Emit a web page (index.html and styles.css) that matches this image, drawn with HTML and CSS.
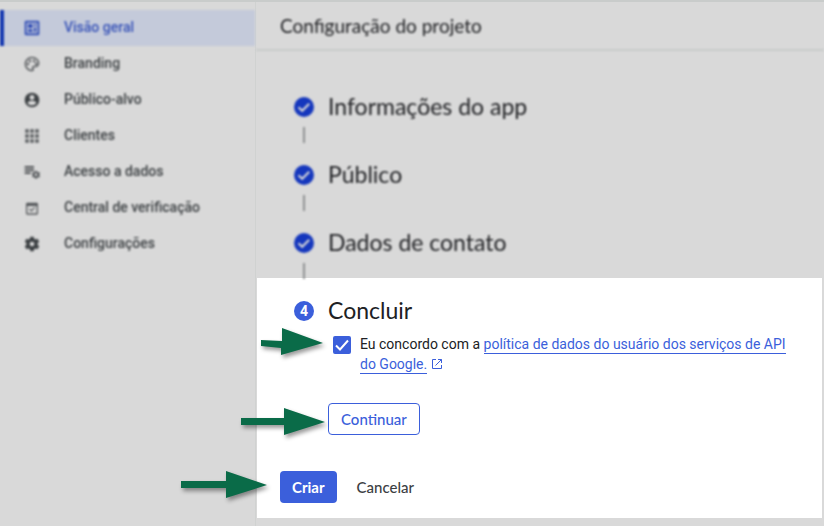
FILE: index.html
```html
<!DOCTYPE html>
<html lang="pt-BR">
<head>
<meta charset="utf-8">
<meta name="viewport" content="width=device-width, initial-scale=1">
<title>Configuração do projeto</title>
<link rel="stylesheet" href="styles.css">
</head>
<body>
<div class="app">
  <nav class="sidebar">
    <a class="nav-item active" href="#"><svg class="nav-icon" viewBox="0 0 24 24"><path fill-rule="evenodd" d="M3 1h18a2 2 0 0 1 2 2v18a2 2 0 0 1-2 2H3a2 2 0 0 1-2-2V3a2 2 0 0 1 2-2zm1 3v16h16V4zM6 6h7v6H6zm9 0h3v3h-3zm0 5h3v7h-3zM6 14h7v4H6z"/></svg><span>Visão geral</span></a>
    <a class="nav-item" href="#"><svg class="nav-icon soft" viewBox="0 0 24 24"><path d="M12 23C5.900 23 1 18 1 12S5.900 1 12 1s11 4.500 11 9.800c0 3.400-2.700 6.100-6.100 6.100h-2c-.9 0-1.200.9-.6 1.600 1.500 1.800.4 4.500-2.300 4.500zm0-19.700c-4.800 0-8.700 3.900-8.700 8.700s3.900 8.700 8.700 8.700c.5 0 .7-.4.4-.8-1.600-2.200-.2-5.300 2.500-5.300h2c2.100 0 3.800-1.700 3.800-3.800 0-4.100-3.900-7.500-8.700-7.500z"/><circle cx="6" cy="12" r="1.800"/><circle cx="9" cy="7.500" r="1.800"/><circle cx="15" cy="7.500" r="1.800"/><circle cx="18" cy="11.500" r="1.800"/></svg><span>Branding</span></a>
    <a class="nav-item" href="#"><svg class="nav-icon" viewBox="0 0 24 24"><path fill-rule="evenodd" d="M12 1a11 11 0 1 0 0 22 11 11 0 0 0 0-22zm0 3.500a3.700 3.700 0 1 1 0 7.400 3.700 3.700 0 0 1 0-7.400zM12 20c-2.800 0-5.200-1.400-6.600-3.500.1-2.200 4.400-3.400 6.600-3.400s6.500 1.200 6.600 3.400A7.900 7.900 0 0 1 12 20z"/></svg><span>Público-alvo</span></a>
    <a class="nav-item" href="#"><svg class="nav-icon soft" viewBox="0 0 24 24"><path d="M2 2h5v5H2zm7.500 0h5v5h-5zM17 2h5v5h-5zM2 9.500h5v5H2zm7.500 0h5v5h-5zm7.500 0h5v5h-5zM2 17h5v5H2zm7.500 0h5v5h-5zm7.500 0h5v5h-5z"/></svg><span>Clientes</span></a>
    <a class="nav-item" href="#"><svg class="nav-icon soft" viewBox="0 0 24 24"><path fill-rule="evenodd" d="M1 3h14v3H1zm0 4.500h14v3H1zM1 12h9v3H1zm16-2h2l.5 1.600 1.500.8 1.600-.4 1.400 2-1 1.400v1.500l1 1.300-1.300 2-1.700-.4-1.500.9L19 22h-2l-.6-1.500-1.500-.8-1.700.3-1.200-2 1-1.400v-1.400l-1-1.300 1.300-2 1.600.4 1.500-.8zm1 4a2 2 0 1 0 0 4 2 2 0 0 0 0-4z"/></svg><span>Acesso a dados</span></a>
    <a class="nav-item" href="#"><svg class="nav-icon soft" viewBox="0 0 24 24"><path fill-rule="evenodd" d="M5 4h14a2 2 0 0 1 2 2v14a2 2 0 0 1-2 2H5a2 2 0 0 1-2-2V6c0-1.100.9-2 2-2zm0 5v11h14V9zm2.500 5 1.300-1.300 2.200 2.200 4.500-4.400 1.300 1.300-5.800 5.700z"/></svg><span>Central de verificação</span></a>
    <a class="nav-item" href="#"><svg class="nav-icon" viewBox="0 0 24 24"><path fill-rule="evenodd" d="M9.500 1h5l.7 3.100 2 1.200 3.100-1 2.500 4.400-2.400 2.200v2.300l2.400 2.200-2.500 4.300-3.100-1-2 1.200-.7 3.100h-5l-.7-3.100-2-1.200-3.100 1-2.500-4.300 2.400-2.200v-2.300L1.200 8.700l2.500-4.400 3.100 1 2-1.200zM12 8.500a3.500 3.500 0 1 0 0 7 3.500 3.500 0 0 0 0-7z"/></svg><span>Configurações</span></a>
  </nav>
  <main class="main">
    <header class="header"><h1>Configuração do projeto</h1></header>
    <ol class="steps">
      <li class="step"><svg class="marker" viewBox="0 0 20 20"><circle cx="10" cy="10" r="10"/><path d="m4.500 10.300 3.700 3.500 7-7"/></svg><h2>Informações do app</h2></li>
      <li class="step"><svg class="marker" viewBox="0 0 20 20"><circle cx="10" cy="10" r="10"/><path d="m4.500 10.300 3.700 3.500 7-7"/></svg><h2>Público</h2></li>
      <li class="step"><svg class="marker" viewBox="0 0 20 20"><circle cx="10" cy="10" r="10"/><path d="m4.500 10.300 3.700 3.500 7-7"/></svg><h2>Dados de contato</h2></li>
    </ol>
    <form class="panel">
      <div class="panel-title"><span class="number">4</span><h2>Concluir</h2></div>
      <div class="consent">
        <svg class="arrow arrow-consent" viewBox="0 0 66 36"><path d="M2 14l21 1V2l41 15-42 12v-7L2 20z"/></svg>
        <span class="check"><input type="checkbox" id="agree" checked><svg viewBox="0 0 18 18"><path d="m3 9.500 4 4 8-9"/></svg></span>
        <div class="terms"><label for="agree">Eu concordo com a</label> <a href="#">política de dados do usuário dos serviços de API do Google.</a> <svg class="external" viewBox="0 0 12 12"><path d="M5 1.500H1.500v9h9V7M7 1.500h3.500V5M10.500 1.500 4.500 7.500"/></svg></div>
      </div>
      <div class="continue">
        <svg class="arrow" viewBox="0 0 88 36"><path d="M1 13h43V3l41 14-41 13V20H1z"/></svg>
        <button class="button outlined" type="button">Continuar</button>
      </div>
      <div class="actions">
        <div class="create">
          <svg class="arrow arrow-create" viewBox="0 0 88 36"><path d="M1 13h45V3l41 14-41 13V20H1z"/></svg>
          <button class="button filled" type="submit">Criar</button>
        </div>
        <button class="button plain" type="button">Cancelar</button>
      </div>
    </form>
  </main>
</div>
</body>
</html>
```
FILE: styles.css
```css
* { box-sizing: border-box; }

:root {
  --blue: #3b5fdb;
  --dim: #d9d9d9;
  --line: #c9cccb;
  --display: Lato, "Open Sans", sans-serif;
}

body {
  margin: 0;
  background: var(--dim);
  color: #202124;
  font: 14px/20px Roboto, sans-serif;
}

h1, h2 { margin: 0; font-family: var(--display); }

.app {
  display: grid;
  grid-template-columns: 256px 1fr;
  min-height: 100vh;
  border-top: 2px solid var(--line);
}

.sidebar {
  padding-top: 8px;
  border-right: 1px solid #d0d2d1;
}

.nav-item {
  display: flex;
  align-items: center;
  gap: 24px;
  height: 36px;
  padding-left: 20px;
  border-left: 4px solid transparent;
  color: #3c4043;
  font-weight: 500;
  text-decoration: none;
  filter: blur(1px);
}

.nav-item span { padding-bottom: 2px; }

.nav-item.active {
  border-color: #1236b0;
  background: #c4cada;
  color: #3551b7;
}

.nav-icon { width: 16px; height: 16px; fill: currentColor; }
.nav-icon.soft { fill: #55585b; }

.header {
  height: 49px;
  padding: 14px 24px;
  border-bottom: 2px solid var(--line);
  filter: blur(1px);
}

.header h1 { font-size: 19px; line-height: 20px; font-weight: 400; }

.steps {
  margin: 0;
  padding: 40px 38px 0;
  list-style: none;
  filter: blur(1px);
}

.step {
  display: grid;
  grid-template-columns: 20px 1fr;
  column-gap: 14px;
  align-items: center;
}

.step::after {
  content: "";
  width: 2px;
  height: 16px;
  margin: 4px 9px 16px;
  background: #909293;
}

.step:last-child::after { margin-bottom: 0; }

h2 { padding-bottom: 2px; font-size: 23px; line-height: 30px; font-weight: 400; }

.marker { width: 20px; height: 20px; fill: #1537bd; }
.marker path { fill: none; stroke: var(--dim); stroke-width: 2; }

.panel {
  margin: -1px 2px 8px 1px;
  padding: 17px 36px 15px 37px;
  background: #fff;
}

.panel-title { display: flex; align-items: center; gap: 14px; }

.number {
  width: 20px;
  border-radius: 50%;
  background: var(--blue);
  color: #fff;
  font-weight: 700;
  text-align: center;
}

.consent {
  position: relative;
  display: flex;
  gap: 9px;
  margin: 7px 0 0 39px;
}

.check {
  position: relative;
  flex: none;
  width: 18px;
  height: 18px;
  margin-top: 2px;
}

.check input {
  appearance: none;
  display: block;
  width: 18px;
  height: 18px;
  margin: 0;
  border: 2px solid var(--blue);
  border-radius: 2px;
}

.check input:checked { background: var(--blue); }

.check svg {
  position: absolute;
  inset: 0;
  fill: none;
  stroke: #fff;
  stroke-width: 2;
  pointer-events: none;
}

.check input:not(:checked) + svg { display: none; }

.terms a {
  padding-bottom: 1px;
  border-bottom: 1px solid var(--blue);
  color: var(--blue);
  text-decoration: none;
}

.external {
  width: 12px;
  height: 12px;
  vertical-align: -1px;
  fill: none;
  stroke: var(--blue);
}

.continue {
  position: relative;
  width: fit-content;
  margin: 29px 0 0 34px;
}

.actions {
  display: flex;
  gap: 7px;
  margin: 36px 0 0 -14px;
}

.create { position: relative; }

.button {
  height: 32px;
  padding: 0 12px;
  border: 1px solid transparent;
  border-radius: 4px;
  background: transparent;
  font: 500 15px/20px var(--display);
}

.outlined { border-color: var(--blue); color: var(--blue); }
.filled { padding: 0 11px; background: var(--blue); color: #fff; font-weight: 700; }
.plain { color: #3c4043; }

.arrow {
  position: absolute;
  right: 100%;
  top: 2px;
  width: 88px;
  height: 36px;
  fill: #0a6b48;
  filter: drop-shadow(2px 3px 2px #0006);
}

.arrow-consent { top: -8px; right: calc(100% + 8px); width: 66px; }
.arrow-create { right: calc(100% + 12px); top: -3px; }
```
